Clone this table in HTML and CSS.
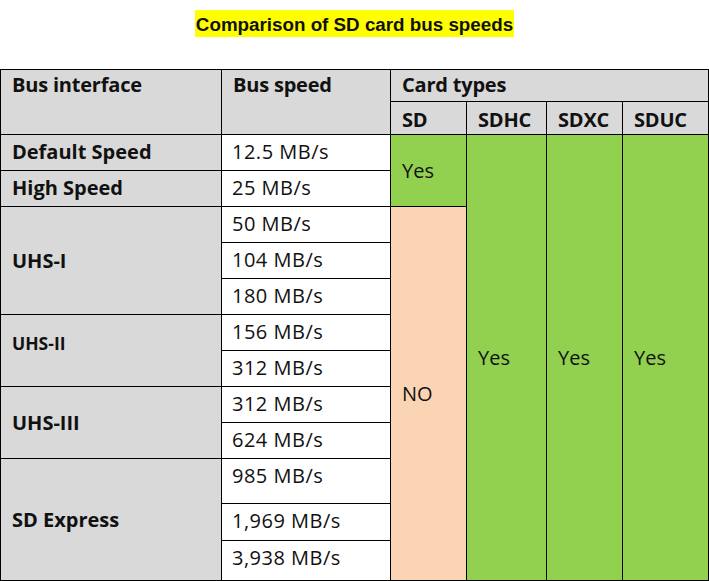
FILE: index.html
```html
<!DOCTYPE html>
<html lang="en">
<head>
<meta charset="utf-8">
<title>Comparison of SD card bus speeds</title>
<link rel="stylesheet" href="styles.css">
</head>
<body>
<div class="page">
  <div class="title-wrap"><span class="title">Comparison of SD card bus speeds</span></div>
  <div class="speed-table">
    <div class="cell head top span-2">Bus interface</div>
    <div class="cell label top">Default Speed</div>
    <div class="cell label top">High Speed</div>
    <div class="cell label mid span-3">UHS-I</div>
    <div class="cell label mid span-2 small">UHS-II</div>
    <div class="cell label mid span-2">UHS-III</div>
    <div class="cell label mid span-3">SD Express</div>

    <div class="cell head top span-2">Bus speed</div>
    <div class="cell speed top">12.5 MB/s</div>
    <div class="cell speed top">25 MB/s</div>
    <div class="cell speed top">50 MB/s</div>
    <div class="cell speed top">104 MB/s</div>
    <div class="cell speed top">180 MB/s</div>
    <div class="cell speed top">156 MB/s</div>
    <div class="cell speed top">312 MB/s</div>
    <div class="cell speed top">312 MB/s</div>
    <div class="cell speed top">624 MB/s</div>
    <div class="cell speed top">985 MB/s</div>
    <div class="cell speed top">1,969 MB/s</div>
    <div class="cell speed top">3,938 MB/s</div>

    <div class="cell head top wide">Card types</div>
    <div class="cell head sub">SD</div>
    <div class="cell yes mid span-2">Yes</div>
    <div class="cell no mid span-10">NO</div>

    <div class="cell head sub">SDHC</div>
    <div class="cell yes mid span-12">Yes</div>

    <div class="cell head sub">SDXC</div>
    <div class="cell yes mid span-12">Yes</div>

    <div class="cell head sub">SDUC</div>
    <div class="cell yes mid span-12">Yes</div>
  </div>
</div>
</body>
</html>
```

FILE: styles.css
```css
html, body {
  margin: 0;
  padding: 0;
  background: #ffffff;
}

.page {
  width: 709px;
}

.title-wrap {
  height: 69px;
  box-sizing: border-box;
  padding-top: 10px;
  text-align: center;
}

.title {
  display: inline-block;
  height: 27px;
  box-sizing: border-box;
  padding: 2px 1px 0 1px;
  line-height: 25px;
  background: #ffff00;
  color: #111111;
  font-family: "Liberation Sans", Arial, sans-serif;
  font-weight: bold;
  font-size: 18.8px;
}

.speed-table {
  display: grid;
  grid-auto-flow: column;
  grid-template-columns: 220px 168px 75px 79px 75px 85px;
  grid-template-rows: 31px 32px repeat(9, 35px) 44px 36px 39px;
  gap: 1px;
  padding: 1px;
  width: 709px;
  box-sizing: border-box;
  background: #000000;
  font-family: "Open Sans", "Noto Sans", sans-serif;
  font-size: 20px;
  line-height: 24px;
  color: #111111;
}

.cell {
  display: flex;
  padding-left: 11px;
  box-sizing: border-box;
  overflow: hidden;
  white-space: nowrap;
}

.top {
  align-items: flex-start;
  padding-top: 5px;
}

.mid {
  align-items: center;
}

.sub {
  align-items: center;
  padding-top: 4px;
}

.span-2 { grid-row: span 2; }
.span-3 { grid-row: span 3; }
.span-10 { grid-row: span 10; }
.span-12 { grid-row: span 12; }
.wide { grid-column: span 4; }

.head {
  background: #d9d9d9;
  font-weight: bold;
  letter-spacing: -0.2px;
}

.head.top {
  padding-top: 3px;
}

.label {
  background: #d9d9d9;
  font-weight: bold;
}

.small {
  font-size: 17.5px;
  padding-bottom: 16px;
}

.speed {
  background: #ffffff;
  padding-left: 10px;
  letter-spacing: 0.5px;
}

.yes {
  background: #92d050;
}

.no {
  background: #fbd4b4;
}
```
